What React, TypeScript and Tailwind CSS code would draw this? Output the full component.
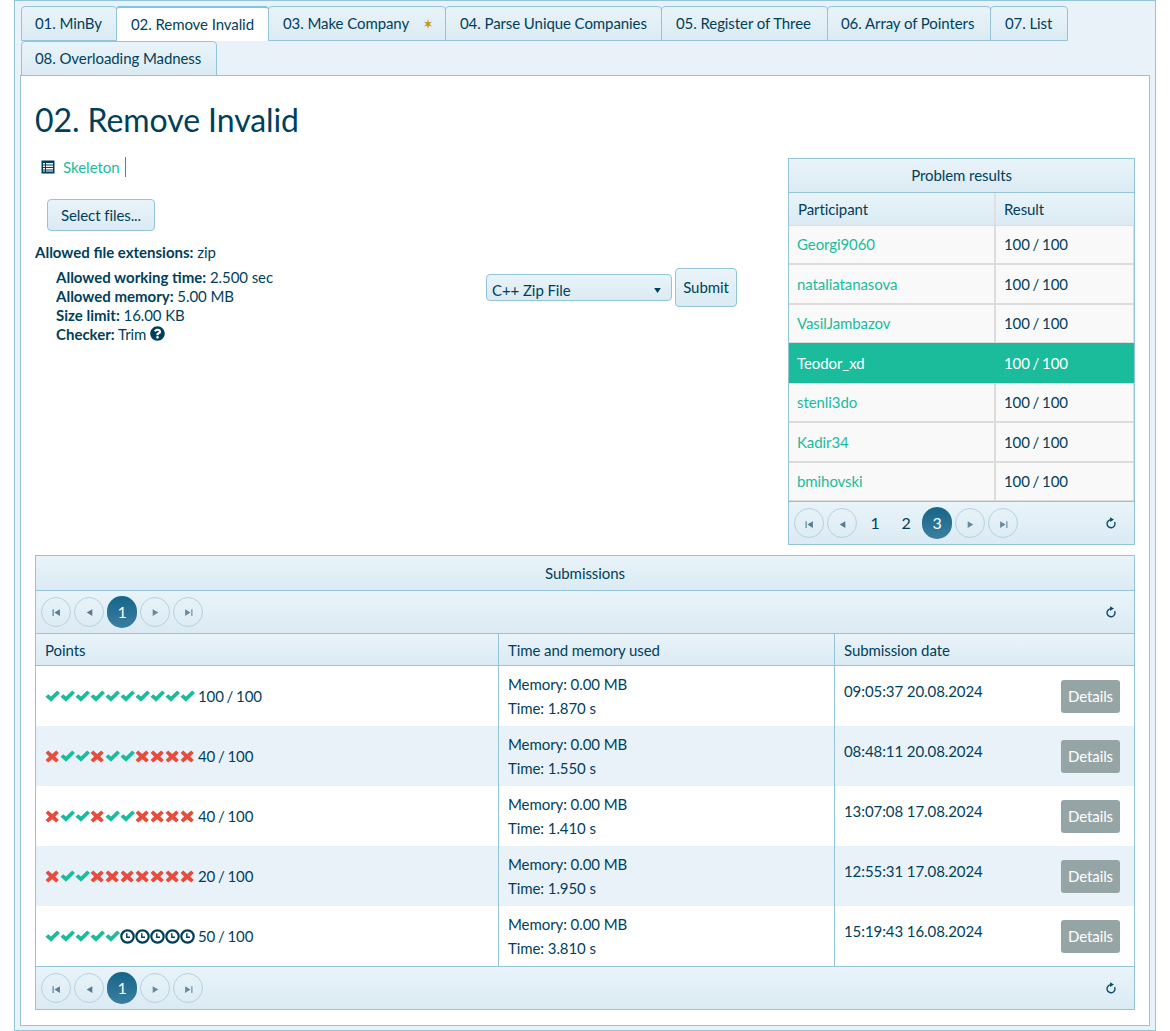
import type { ReactNode } from 'react';
import { FaQuestionCircle } from 'react-icons/fa';

const tabs = [
  { name: '01. MinBy', w: 'w-[96px]', pad: 'pl-[13px]' },
  { name: '02. Remove Invalid', w: 'w-[153px]', pad: 'pl-[14px]', active: true },
  { name: '03. Make Company', w: 'w-[178px]', pad: 'pl-[14px]', star: true },
  { name: '04. Parse Unique Companies', w: 'w-[217px]', pad: 'pl-[14px]' },
  { name: '05. Register of Three', w: 'w-[167px]', pad: 'pl-[14px]' },
  { name: '06. Array of Pointers', w: 'w-[164px]', pad: 'pl-[13px]' },
  { name: '07. List', w: 'w-[78px]', pad: 'pl-[14px]' },
  { name: '08. Overloading Madness', w: 'w-[196px]', pad: 'pl-[13px]' },
];

const results = ['Georgi9060', 'nataliatanasova', 'VasilJambazov', 'Teodor_xd', 'stenli3do', 'Kadir34', 'bmihovski'];

const submissions = [
  { marks: 'cccccccccc', points: '100 / 100', time: '1.870 s', date: '09:05:37 20.08.2024' },
  { marks: 'xccxccxxxx', points: '40 / 100', time: '1.550 s', date: '08:48:11 20.08.2024' },
  { marks: 'xccxccxxxx', points: '40 / 100', time: '1.410 s', date: '13:07:08 17.08.2024' },
  { marks: 'xccxxxxxxx', points: '20 / 100', time: '1.950 s', date: '12:55:31 17.08.2024' },
  { marks: 'cccccttttt', points: '50 / 100', time: '3.810 s', date: '15:19:43 16.08.2024' },
];

const gradient = 'bg-gradient-to-b from-[#e9f4f9] to-[#dbeaf3]';

function Mark({ type }: { type: string }) {
  if (type === 'c') {
    return (
      <svg viewBox="0 0 15 15" className="w-[15px] h-[15px] shrink-0">
        <path d="M0.5 7.8 L3.2 5.2 L6 7.6 L12.2 1.6 L15 4 L6 12.8 Z" fill="#1abc9c" />
      </svg>
    );
  }
  if (type === 'x') {
    return (
      <svg viewBox="0 0 15 15" className="w-[15px] h-[15px] shrink-0">
        <path d="M3.2 1.6 L7.2 4.9 L11.2 1.6 L13.8 4.1 L10.3 7.6 L13.8 11.1 L11.2 13.6 L7.2 10.3 L3.2 13.6 L0.6 11.1 L4.1 7.6 L0.6 4.1 Z" fill="#e74c3c" />
      </svg>
    );
  }
  return (
    <svg viewBox="0 0 15 15" className="w-[15px] h-[15px] shrink-0">
      <circle cx="7.5" cy="7.5" r="6.2" fill="none" stroke="#003f5c" strokeWidth="2.2" />
      <path d="M6.8 4.2 V8.2 H10" fill="none" stroke="#003f5c" strokeWidth="1.4" />
    </svg>
  );
}

function Refresh() {
  return (
    <svg viewBox="0 0 12 12" className="w-3 h-3">
      <path d="M6 2.8 A4 4 0 1 0 9.6 5" fill="none" stroke="#0f4f6c" strokeWidth="1.4" />
      <path d="M5 0.3 L9 2.6 L5 4.9 Z" fill="#0f4f6c" />
    </svg>
  );
}

function NavButton({ kind }: { kind: 'first' | 'prev' | 'next' | 'last' }) {
  const flip = kind === 'next' || kind === 'last';
  return (
    <span className="w-[30px] h-[30px] rounded-full border border-[#b4d2e0] flex items-center justify-center">
      <svg viewBox="0 0 8 8" className={flip ? 'w-[9px] h-[9px] opacity-70 mt-0.5' : 'w-[9px] h-[9px] opacity-80 mt-0.5'}>
        {kind === 'first' && <path d="M0.5 1 H1.5 V7 H0.5 Z M7 1 V7 L2.2 4 Z" fill="#33607a" />}
        {kind === 'prev' && <path d="M6.5 1 V7 L1.5 4 Z" fill="#33607a" />}
        {kind === 'next' && <path d="M1.5 1 V7 L6.5 4 Z" fill="#33607a" />}
        {kind === 'last' && <path d="M7.5 1 H6.5 V7 H7.5 Z M1 1 V7 L5.8 4 Z" fill="#33607a" />}
      </svg>
    </span>
  );
}

function Pager({ pages, current, className }: { pages: number[]; current: number; className: string }) {
  return (
    <div className={`flex items-center pl-[5px] pr-[17px] ${gradient} ${className}`}>
      <div className="flex items-center gap-[3px]">
        <NavButton kind="first" />
        <NavButton kind="prev" />
        {pages.map((p) =>
          p === current ? (
            <span key={p} className="w-[30px] h-8 rounded-full bg-gradient-to-b from-[#14658a] to-[#3a7f9f] text-white flex items-center justify-center text-[16px]">
              {p}
            </span>
          ) : (
            <span key={p} className="w-7 h-8 pl-[2px] flex items-center justify-center text-[16px]">
              {p}
            </span>
          ),
        )}
        <NavButton kind="next" />
        <NavButton kind="last" />
      </div>
      <span className="ml-auto flex">
        <Refresh />
      </span>
    </div>
  );
}

function Tab({ name, w, pad, active, star }: { name: string; w: string; pad: string; active?: boolean; star?: boolean }) {
  return (
    <div
      className={`${w} ${pad} h-[35px] -mr-px border border-[#94c4d9] rounded-t-[4px] pr-[13px] flex items-center whitespace-nowrap ${
        active ? 'bg-white border-b-0 border-t-2 border-t-[#7fc5e3] relative z-10' : gradient
      }`}
    >
      {name}
      {star && (
        <svg viewBox="0 0 10 10" className="w-[10px] h-[10px] ml-auto mr-[-1px]">
          <path d="M5 0 L5.9 3.4 L9.3 2.5 L6.4 5 L9.3 7.5 L5.9 6.6 L5 10 L4.1 6.6 L0.7 7.5 L3.6 5 L0.7 2.5 L4.1 3.4 Z" fill="#c8920f" />
        </svg>
      )}
    </div>
  );
}

function Info({ label, children }: { label: string; children: ReactNode }) {
  return (
    <div className="h-[19px] leading-[19px] flex items-center gap-1">
      <span>
        <b className="font-bold tracking-normal">{label}</b> {children}
      </span>
    </div>
  );
}

export default function App() {
  return (
    <div className="w-[1170px] h-[1031px] bg-white text-[#003f5c] text-[15px] tracking-[-0.08px] font-['Lato',sans-serif]">
      <div className="ml-[14px] w-[1142px] h-[1031px] border border-[#94c4d9] bg-[#e8f2f8] px-[5px] pt-[5px]">
        <div className="flex flex-wrap gap-y-0 pl-px w-[1128px]">
          {tabs.map((t) => (
            <Tab key={t.name} {...t} />
          ))}
        </div>

        <div className="w-[1130px] h-[951px] -mt-px relative bg-white border border-[#94c4d9] px-[14px] pt-[5px]">
          <h1 className="text-[32px] leading-[78px] h-[77px] font-normal">02. Remove Invalid</h1>

          <div className="flex justify-between h-[387px]">
            <div className="w-[702px]">
              <div className="flex items-center h-[20px] pl-[6px] mt-[-1px]">
                <svg viewBox="0 0 14 14" className="w-[14px] h-[14px] mr-2">
                  <rect x="0.5" y="0.5" width="13" height="13" fill="#003f5c" />
                  <path d="M2 3 H12 V11.5 H2 Z" fill="#fff" />
                  <path d="M2 5 H12 M2 7.5 H12 M2 10 H12 M4.5 3 V12" stroke="#003f5c" strokeWidth="1" fill="none" />
                </svg>
                <a className="text-[#1abc9c] pr-[5px] border-r border-[#6b7f88] leading-[20px] tracking-normal">Skeleton</a>
              </div>

              <div className="flex">
                <div className="w-[451px]">
                  <button className={`mt-[22px] ml-3 w-[108px] h-8 border border-[#94c4d9] rounded-[4px] ${gradient}`}>
                    Select files...
                  </button>
                  <div className="mt-[12px] leading-[19px]">
                    <b className="font-bold tracking-normal">Allowed file extensions:</b> zip
                  </div>
                  <div className="mt-[6px] pl-[21px]">
                    <Info label="Allowed working time:">2.500 sec</Info>
                    <Info label="Allowed memory:">5.00 MB</Info>
                    <Info label="Size limit:">16.00 KB</Info>
                    <Info label="Checker:">
                      Trim <FaQuestionCircle className="inline w-[15px] h-[15px] align-[-1px]" />
                    </Info>
                  </div>
                </div>
                <div className="flex items-start mt-[91px] gap-[3px]">
                  <div className={`mt-[6px] w-[186px] h-[27px] border border-[#94c4d9] rounded-[4px] pl-[5px] pr-[10px] pt-[5px] flex items-center justify-between ${gradient}`}>
                    C++ Zip File
                    <svg viewBox="0 0 8 6" className="w-[7px] h-[5px]">
                      <path d="M0 0 H8 L4 6 Z" fill="#003f5c" />
                    </svg>
                  </div>
                  <button className={`w-[62px] h-[39px] border border-[#94c4d9] rounded-[4px] ${gradient}`}>Submit</button>
                </div>
              </div>
            </div>

            <div className="w-[347px] h-[387px] border border-[#94c4d9]">
              <div className={`h-[34px] flex items-center justify-center border-b border-[#94c4d9] ${gradient}`}>Problem results</div>
              <div className={`h-[31.5px] grid grid-cols-[205px_1fr] ${gradient}`}>
                <div className="pl-[9px] flex items-center">Participant</div>
                <div className="pl-[8px] flex items-center border-l-2 border-[#e0e0e0]">Result</div>
              </div>
              {results.map((name) => {
                const selected = name === 'Teodor_xd';
                return (
                  <div
                    key={name}
                    className={`h-[39.5px] grid grid-cols-[205px_1fr] ${selected ? 'bg-[#1abc9c] text-white' : 'bg-[#f9f9f9] border-y border-r border-[#dcdcdc]'}`}
                  >
                    <div className={`pl-[8px] flex items-center ${selected ? '' : 'text-[#1abc9c]'}`}>{name}</div>
                    <div className={`flex items-center [word-spacing:-1px] ${selected ? 'pl-[10px]' : 'pl-[8px] border-l-2 border-[#dcdcdc]'}`}>100 / 100</div>
                  </div>
                );
              })}
              <Pager pages={[1, 2, 3]} current={3} className="h-[43px] border-t border-[#94c4d9]" />
            </div>
          </div>

          <div className="mt-[10px] border border-[#94c4d9] w-[1100px]">
            <div className={`h-[35px] flex items-center justify-center border-b border-[#94c4d9] ${gradient}`}>Submissions</div>
            <Pager pages={[1]} current={1} className="h-[43px] pb-px border-b border-[#94c4d9]" />
            <div className={`h-[32px] grid grid-cols-[462px_336px_1fr] border-b border-[#94c4d9] ${gradient}`}>
              <div className="pl-[9px] pt-px flex items-center">Points</div>
              <div className="pl-[9px] pt-px flex items-center border-l border-[#94c4d9]">Time and memory used</div>
              <div className="pl-[9px] pt-px flex items-center border-l border-[#94c4d9]">Submission date</div>
            </div>
            {submissions.map((s, i) => (
              <div key={s.date} className={`h-[60px] grid grid-cols-[462px_336px_1fr] ${i % 2 === 1 ? 'bg-[#e9f2f8]' : 'bg-white'}`}>
                <div className="pl-[9px] flex items-center [word-spacing:-1px]">
                  <span className="flex mr-[3px]">
                    {s.marks.split('').map((m, j) => (
                      <Mark key={j} type={m} />
                    ))}
                  </span>
                  {s.points}
                </div>
                <div className="pl-[9px] pt-[6px] border-l border-[#94c4d9] leading-[24px]">
                  <div>Memory: 0.00 MB</div>
                  <div>Time: {s.time}</div>
                </div>
                <div className="pl-[9px] pr-[14px] border-l border-[#94c4d9] flex justify-between">
                  <span className="pt-[13px] leading-[24px]">{s.date}</span>
                  <button className="mt-[14px] w-[59px] h-[33px] rounded-[3px] bg-[#95a5a6] text-white">Details</button>
                </div>
              </div>
            ))}
            <Pager pages={[1]} current={1} className="h-[43px] border-t border-[#94c4d9]" />
          </div>
        </div>
      </div>
    </div>
  );
}
